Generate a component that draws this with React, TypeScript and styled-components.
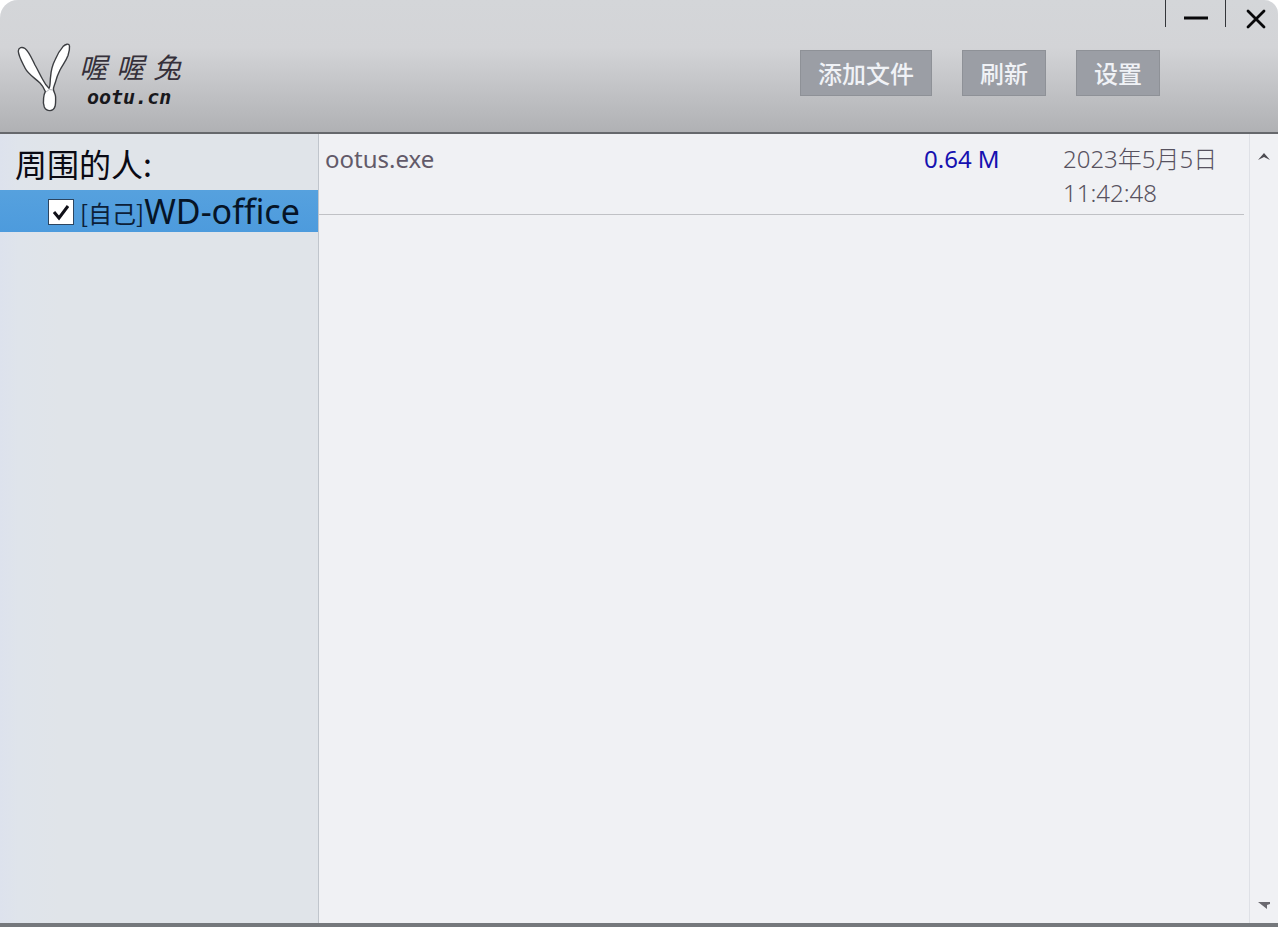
import React, { useState } from 'react';
import styled, { createGlobalStyle } from 'styled-components';

const GlobalStyle = createGlobalStyle`
  * { box-sizing: border-box; }
  body {
    margin: 0;
    background: #ffffff;
    font-family: "Noto Sans", "Noto Sans CJK SC", sans-serif;
    color: #0a0a14;
  }
`;

const Window = styled.div`
  display: flex;
  flex-direction: column;
  min-height: 100vh;
  margin-right: 2px;
  border-bottom: 4px solid #75787c;
  border-radius: 18px 14px 0 0;
  overflow: hidden;
  background: #f0f1f4;
`;

const Header = styled.header`
  display: flex;
  align-items: flex-start;
  height: 134px;
  border-bottom: 2px solid #66686c;
  background: linear-gradient(#d4d6d9 0%, #d3d4d7 36%, #b0b1b4 100%);
`;

const Brand = styled.div`
  display: flex;
  flex: 1;
  padding: 42px 0 0 16px;
`;

const BrandText = styled.div`
  display: flex;
  flex-direction: column;
  padding: 6px 0 0 8px;
`;

const BrandName = styled.div`
  display: flex;
  gap: 9px;
  font: italic 400 28px/36px "Noto Sans CJK SC", sans-serif;
  color: #35303a;
`;

const BrandSite = styled.div`
  padding-left: 8px;
  font: italic 700 20px/26px "DejaVu Sans Mono", monospace;
  color: #18181c;
`;

const Toolbar = styled.nav`
  display: flex;
  gap: 30px;
  padding-top: 50px;
`;

const ToolButton = styled.button`
  height: 46px;
  padding: 0 17px;
  border: 1px solid #8e9197;
  background: #9b9ea5;
  color: #f0f2f6;
  font: 500 24px/42px "Noto Sans CJK SC", sans-serif;
`;

const WindowControls = styled.div`
  display: flex;
  padding-left: 5px;
`;

const ControlButton = styled.button<{ $divided?: boolean }>`
  display: flex;
  align-items: center;
  justify-content: center;
  width: ${(p) => (p.$divided ? 61 : 52)}px;
  height: ${(p) => (p.$divided ? 27 : 38)}px;
  padding: ${(p) => (p.$divided ? '9px 0 0' : '0 0 0 8px')};
  border: solid #34363a;
  border-width: 0 ${(p) => (p.$divided ? '1px' : '0')};
  background: none;
  color: #08080a;
`;

const Body = styled.main`
  display: flex;
  flex: 1;
`;

const Sidebar = styled.aside`
  flex: 0 0 319px;
  border-right: 1px solid #c0c5cc;
  background: linear-gradient(90deg, #dde2ed 0, #dfe4eb 18px, #e0e4e9 60px);
`;

const SidebarTitle = styled.h2`
  margin: 0;
  padding: 4px 15px 2px;
  font: 400 32px/50px "Noto Sans CJK SC", sans-serif;
`;

const Person = styled.label`
  display: flex;
  align-items: center;
  height: 42px;
  padding-left: 48px;
  background: linear-gradient(#56a1de, #4d9bdd);
  white-space: nowrap;
`;

const PersonCheck = styled.input`
  appearance: none;
  flex: none;
  width: 26px;
  height: 26px;
  margin: 2px 6px 0 0;
  border: 1px solid #2c4560;
  background: #ffffff;
  &:checked {
    background: #ffffff
      url("data:image/svg+xml,%3Csvg xmlns='http://www.w3.org/2000/svg' viewBox='0 0 24 24'%3E%3Cpath d='M5 12l5 6 9-12' fill='none' stroke='%23101018' stroke-width='3'/%3E%3C/svg%3E")
      center / 24px 24px;
  }
`;

const SelfTag = styled.span`
  padding-top: 4px;
  font: 400 24px/32px "Noto Sans CJK SC", sans-serif;
  color: #0c2038;
`;

const PersonName = styled.span`
  font-size: 34px;
  line-height: 42px;
  color: #061426;
`;

const Files = styled.section`
  flex: 1;
  min-width: 0;
  padding-right: 5px;
`;

const FileTable = styled.table`
  width: 100%;
  border-collapse: collapse;
  table-layout: fixed;
`;

const FileRow = styled.tr`
  border-bottom: 1px solid #c0c1c5;
`;

const Cell = styled.td<{ $width?: number; $color: string; $weight: number }>`
  width: ${(p) => (p.$width ? `${p.$width}px` : 'auto')};
  padding: 8px 20px 4px 6px;
  vertical-align: top;
  font-size: 24px;
  line-height: 34px;
  font-weight: ${(p) => p.$weight};
  color: ${(p) => p.$color};
`;

const ScrollTrack = styled.div`
  display: flex;
  flex-direction: column;
  justify-content: space-between;
  width: 29px;
  border-left: 1px solid #dfe1e6;
`;

const ScrollButton = styled.button`
  display: flex;
  align-items: center;
  justify-content: center;
  height: 36px;
  margin-top: 4px;
  padding: 0;
  border: 0;
  background: none;
`;

const BunnyEars = () => (
  <svg width="55" height="72" viewBox="0 0 55 72" aria-hidden="true">
    <path
      d="M29.300 49.600C28 46 26.500 43.500 24 41C18 35.500 12 32 9 26C6 20 2.500 14 2.300 9C2.500 5.500 6 4.500 9 6.500C13 9.500 16 17 19 23C22 28 24 33 27 38C29 42 31 44.500 33 46.300C34.500 44 34 38 34.600 34.600C35 29 36.500 23 39 18C41 13 44 8 47 4.600C49.500 2 53 1 53.500 4C53.800 7 53 10.500 52 13.500C50 19 46.500 23 44 28C42 32 40.500 36 39.600 39.600C38.700 43 37 45 37.500 48C38 50.500 39.600 52 39.600 55C39.700 58.500 39.700 62 39 64.600C38 67.500 36 68.600 34 68.600C31.500 68.600 29.300 67.500 28.300 65C27.200 62 27.200 59 27.600 56C27.800 53.500 28.300 51.500 29.300 49.600Z"
      fill="#ffffff"
      stroke="#3c3e42"
      strokeWidth="1.400"
      strokeLinejoin="round"
    />
    <path d="M30 50Q33 46 37 48" fill="none" stroke="#b4b6ba" />
  </svg>
);

const files = [{ name: 'ootus.exe', size: '0.64 M', date: '2023年5月5日', time: '11:42:48' }];

export default function App() {
  const [selected, setSelected] = useState(true);

  return (
    <>
      <GlobalStyle />
      <Window>
        <Header>
          <Brand>
            <BunnyEars />
            <BrandText>
              <BrandName>
                <span>喔</span>
                <span>喔</span>
                <span>兔</span>
              </BrandName>
              <BrandSite>ootu.cn</BrandSite>
            </BrandText>
          </Brand>
          <Toolbar>
            <ToolButton>添加文件</ToolButton>
            <ToolButton>刷新</ToolButton>
            <ToolButton>设置</ToolButton>
          </Toolbar>
          <WindowControls>
            <ControlButton $divided aria-label="最小化">
              <svg width="24" height="4" viewBox="0 0 24 4">
                <path d="M0 2h24" stroke="currentColor" strokeWidth="3" />
              </svg>
            </ControlButton>
            <ControlButton aria-label="关闭">
              <svg width="20" height="20" viewBox="0 0 20 20">
                <path
                  d="M2 2l16 16M18 2L2 18"
                  stroke="currentColor"
                  strokeWidth="2.800"
                  strokeLinecap="round"
                />
              </svg>
            </ControlButton>
          </WindowControls>
        </Header>
        <Body>
          <Sidebar>
            <SidebarTitle>周围的人:</SidebarTitle>
            <Person>
              <PersonCheck
                type="checkbox"
                checked={selected}
                onChange={(e) => setSelected(e.target.checked)}
              />
              <SelfTag>[自己]</SelfTag>
              <PersonName>WD-office</PersonName>
            </Person>
          </Sidebar>
          <Files>
            <FileTable>
              <tbody>
                {files.map((f) => (
                  <FileRow key={f.name}>
                    <Cell $color="#625a69" $weight={400}>{f.name}</Cell>
                    <Cell $width={139} $color="#1611b0" $weight={400}>{f.size}</Cell>
                    <Cell $width={187} $color="#57525f" $weight={300}>
                      {f.date} {f.time}
                    </Cell>
                  </FileRow>
                ))}
              </tbody>
            </FileTable>
          </Files>
          <ScrollTrack>
            <ScrollButton aria-label="向上滚动">
              <svg width="14" height="8" viewBox="0 0 14 8">
                <path d="M1 8L7 1l6 7-6-3z" fill="#4c4b51" />
              </svg>
            </ScrollButton>
            <ScrollButton aria-label="向下滚动">
              <svg width="14" height="8" viewBox="0 0 14 8">
                <path d="M1 1h12v2l-3 1v4z" fill="#6a696f" />
              </svg>
            </ScrollButton>
          </ScrollTrack>
        </Body>
      </Window>
    </>
  );
}
